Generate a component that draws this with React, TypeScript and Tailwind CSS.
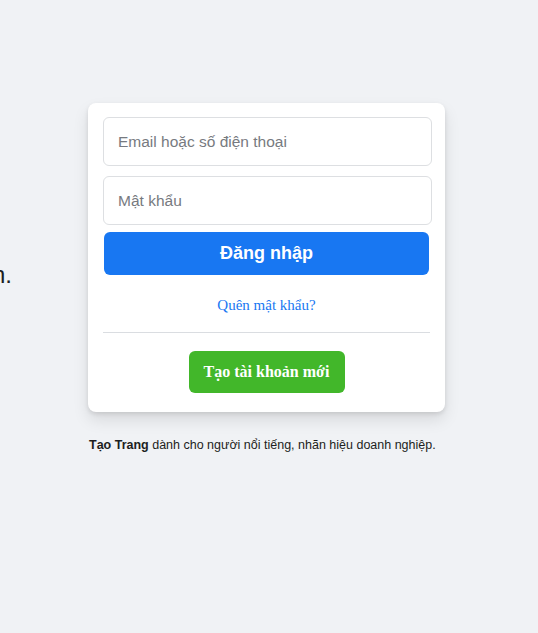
export default function App() {
  return (
    <div className="flex min-h-screen bg-[#f0f2f5] pt-[103px] font-['Liberation_Sans',Arial,sans-serif]">
      <div className="flex w-[12px] shrink-0 justify-end overflow-visible pt-[158px]">
        <h2 className="whitespace-nowrap text-[24px] leading-[28px] text-[#1c1e21]">
          Facebook giúp bạn kết nối và chia sẻ với mọi người trong cuộc sống của bạn.
        </h2>
      </div>

      <div className="ml-[76px] flex flex-col">
        <form className="flex w-[357px] flex-col rounded-lg bg-white pb-[19px] pl-[15px] pt-[14px] shadow-[0_2px_4px_rgba(0,0,0,0.1),0_8px_16px_rgba(0,0,0,0.1)]">
          <input
            type="text"
            placeholder="Email hoặc số điện thoại"
            className="h-[49px] w-[329px] rounded-md border border-[#dddfe2] px-[14px] text-[15.5px] text-[#1c1e21] outline-none placeholder:text-[#777a80]"
          />
          <input
            type="password"
            placeholder="Mật khẩu"
            className="mt-[10px] h-[49px] w-[329px] rounded-md border border-[#dddfe2] px-[14px] text-[15.5px] text-[#1c1e21] outline-none placeholder:text-[#777a80]"
          />
          <button
            type="button"
            className="ml-[1px] mt-[7px] h-[43px] w-[325px] rounded-md bg-[#1877f2] text-[18px] font-bold text-white"
          >
            Đăng nhập
          </button>
          <a
            href="#"
            className="mt-[20px] w-[327px] text-center font-['Liberation_Serif','Times_New_Roman',serif] text-[15px] leading-[20px] text-[#1877f2]"
          >
            Quên mật khẩu?
          </a>
          <div className="mt-[17px] h-px w-[327px] bg-[#dadde1]" />
          <div className="flex w-[327px] justify-center pt-[18px]">
            <button
              type="button"
              className="h-[42px] w-[156px] rounded-md bg-[#42b72a] font-['Liberation_Serif','Times_New_Roman',serif] text-[16px] font-bold text-white"
            >
              Tạo tài khoản mới
            </button>
          </div>
        </form>
        <p className="ml-[1px] mt-[24px] text-[12.5px] leading-[18px] text-[#1c1e21]">
          <b>Tạo Trang</b> dành cho người nổi tiếng, nhãn hiệu doanh nghiệp.
        </p>
      </div>
    </div>
  );
}
